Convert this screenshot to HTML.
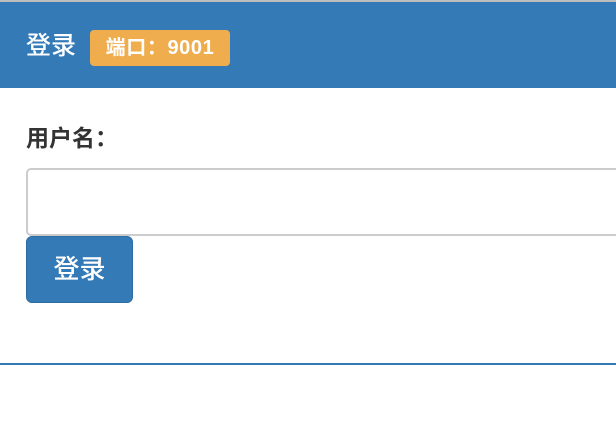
<!DOCTYPE html>
<html><head><meta charset="utf-8"><style>
html,body{margin:0;padding:0;width:616px;height:440px;background:#fff;overflow:hidden;font-family:"Liberation Sans","Noto Sans CJK SC",sans-serif;}
.top{position:absolute;left:0;top:0;width:616px;height:2px;background:#bdbdbd;}
.head{position:absolute;left:0;top:2px;width:616px;height:86px;background:#337ab7;}
.title{position:absolute;left:26px;top:28px;color:#fff;font-size:25px;line-height:32px;font-weight:500;}
.badge{position:absolute;left:90px;top:28px;width:140px;height:36px;background:#f0ad4e;border-radius:4px;color:#fff;font-weight:bold;font-size:20px;line-height:36px;text-align:center;letter-spacing:0.6px;}
.label{position:absolute;left:26px;top:122px;font-weight:bold;font-size:23px;color:#333;line-height:32px;}
.input{position:absolute;left:26px;top:168px;width:620px;height:64px;border:2px solid #ccc;border-radius:5px;}
.btn{position:absolute;left:26px;top:236px;width:105px;height:65px;background:#337ab7;border:1px solid #2e6da4;border-radius:6px;color:#fff;font-size:26px;line-height:65px;text-align:center;font-weight:500;}
.bot{position:absolute;left:0;top:363px;width:616px;height:2px;background:#337ab7;}
</style></head><body>
<div class="top"></div>
<div class="head"><div class="title">登录</div><div class="badge">端口：9001</div></div>
<div class="label">用户名：</div>
<div class="input"></div>
<div class="btn">登录</div>
<div class="bot"></div>
</body></html>
